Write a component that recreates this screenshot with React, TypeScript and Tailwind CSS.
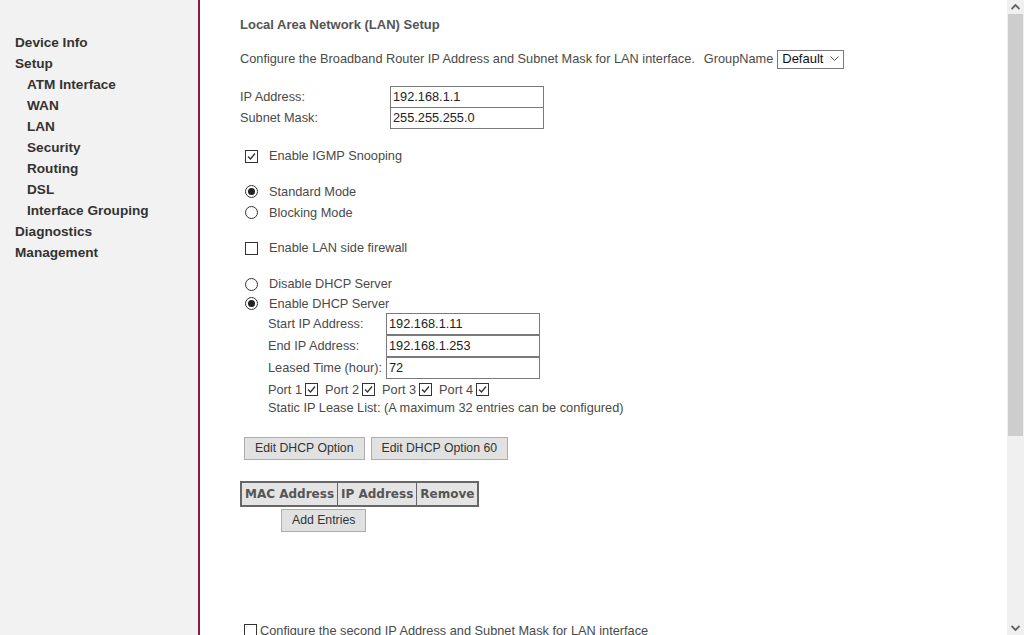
import React from "react";

const font = { fontFamily: '"Liberation Sans", Arial, sans-serif' };

const Check: React.FC<{ checked?: boolean }> = ({ checked }) => (
  <span className="inline-flex w-[13px] h-[13px] border border-[#333] bg-white items-center justify-center shrink-0">
    {checked && (
      <svg width="11" height="11" viewBox="0 0 11 11">
        <path d="M2 5.5 L4.5 8 L9 2.5" fill="none" stroke="#333" strokeWidth="1.3" />
      </svg>
    )}
  </span>
);

const Radio: React.FC<{ checked?: boolean }> = ({ checked }) => (
  <span className="inline-flex w-[13px] h-[13px] rounded-full border border-[#333] bg-white items-center justify-center shrink-0">
    {checked && <span className="w-[7px] h-[7px] rounded-full bg-[#222]" />}
  </span>
);

const Field: React.FC<{ value: string }> = ({ value }) => (
  <div className="w-[154px] h-[22px] border border-[#7a7a7a] bg-white px-[2px] flex items-center text-[#222] text-[12.75px]">
    {value}
  </div>
);

const Button: React.FC<{ label: string }> = ({ label }) => (
  <div className="h-[23px] px-[10px] flex items-center bg-[#e1e1e1] border border-[#adadad] text-[#333] text-[12.25px] whitespace-nowrap">
    {label}
  </div>
);

const menu: { label: string; sub?: boolean }[] = [
  { label: "Device Info" },
  { label: "Setup" },
  { label: "ATM Interface", sub: true },
  { label: "WAN", sub: true },
  { label: "LAN", sub: true },
  { label: "Security", sub: true },
  { label: "Routing", sub: true },
  { label: "DSL", sub: true },
  { label: "Interface Grouping", sub: true },
  { label: "Diagnostics" },
  { label: "Management" },
];

export default function App() {
  return (
    <div className="flex h-[635px] w-[1024px] overflow-hidden bg-white" style={font}>
      {/* left menu frame */}
      <div className="w-[198px] shrink-0 bg-[#f2f2f2] pt-[33px]">
        {menu.map((m) => (
          <div
            key={m.label}
            className={`h-[21px] flex items-center font-bold text-[13.6px] text-[#333] ${m.sub ? "pl-[27px]" : "pl-[15px]"}`}
          >
            {m.label}
          </div>
        ))}
      </div>
      <div className="w-[2px] shrink-0 bg-[#8b1a42]" />

      {/* main frame */}
      <div className="flex-1 pl-[40px] pt-[17px] text-[12.75px] text-[#4a4a4a] overflow-hidden">
        <div className="h-[16px] leading-[16px] font-bold text-[13px] text-[#555]">Local Area Network (LAN) Setup</div>

        <div className="mt-[16px] h-[20px] flex items-center whitespace-nowrap">
          <span>Configure the Broadband Router IP Address and Subnet Mask for LAN interface.</span>
          <span className="ml-[9px]">GroupName</span>
          <div className="ml-[4px] w-[67px] h-[19px] border border-[#7a7a7a] flex items-center justify-between px-[4px] text-[#111] text-[13px]">
            <span>Default</span>
            <svg width="9" height="6" viewBox="0 0 9 6">
              <path d="M0.5 0.5 L4.5 4.5 L8.5 0.5" fill="none" stroke="#555" strokeWidth="1" />
            </svg>
          </div>
        </div>

        <div className="mt-[17px]">
          <div className="flex items-center h-[21px]">
            <span className="w-[150px]">IP Address:</span>
            <Field value="192.168.1.1" />
          </div>
          <div className="flex items-center h-[21px]">
            <span className="w-[150px]">Subnet Mask:</span>
            <Field value="255.255.255.0" />
          </div>
        </div>

        <div className="mt-[20px] h-[16px] flex items-center pl-[5px] gap-[11px]">
          <Check checked />
          <span>Enable IGMP Snooping</span>
        </div>

        <div className="mt-[17px]">
          <div className="h-[21px] flex items-center pl-[5px] gap-[11px]">
            <Radio checked />
            <span>Standard Mode</span>
          </div>
          <div className="h-[21px] flex items-center pl-[5px] gap-[11px]">
            <Radio />
            <span>Blocking Mode</span>
          </div>
        </div>

        <div className="mt-[17px] h-[16px] flex items-center pl-[5px] gap-[11px]">
          <Check />
          <span>Enable LAN side firewall</span>
        </div>

        <div className="mt-[18px]">
          <div className="h-[20px] flex items-center pl-[5px] gap-[11px]">
            <Radio />
            <span>Disable DHCP Server</span>
          </div>
          <div className="h-[19px] flex items-center pl-[5px] gap-[11px]">
            <Radio checked />
            <span>Enable DHCP Server</span>
          </div>
        </div>

        <div className="pl-[28px]">
          <div className="h-[22px] flex items-center">
            <span className="w-[118px]">Start IP Address:</span>
            <Field value="192.168.1.11" />
          </div>
          <div className="h-[22px] flex items-center">
            <span className="w-[118px]">End IP Address:</span>
            <Field value="192.168.1.253" />
          </div>
          <div className="h-[22px] flex items-center">
            <span className="w-[118px] whitespace-nowrap">Leased Time (hour):</span>
            <Field value="72" />
          </div>
          <div className="h-[19px] mt-[1px] flex items-center gap-[3px]">
            {[1, 2, 3, 4].map((n) => (
              <span key={n} className="flex items-center gap-[3px] mr-[4px]">
                <span>Port {n}</span>
                <Check checked />
              </span>
            ))}
          </div>
          <div className="h-[18px] flex items-center">
            Static IP Lease List: (A maximum 32 entries can be configured)
          </div>
        </div>

        <div className="mt-[20px] pl-[4px] flex gap-[6px]">
          <Button label="Edit DHCP Option" />
          <Button label="Edit DHCP Option 60" />
        </div>

        <table
          className="mt-[21px] border-collapse border-2 border-[#666] text-[12px] font-bold text-[#555] whitespace-nowrap"
          style={{ fontFamily: '"DejaVu Sans", Verdana, sans-serif' }}
        >
          <tbody>
            <tr className="h-[24px] bg-[#e4e4e4]">
              <td className="border border-[#666] px-[3px]">MAC Address</td>
              <td className="border border-[#666] px-[3px]">IP Address</td>
              <td className="border border-[#666] px-[3px]">Remove</td>
            </tr>
          </tbody>
        </table>

        <div className="mt-[2px] ml-[41px] w-fit">
          <Button label="Add Entries" />
        </div>

        <div className="mt-[89px] flex items-center pl-[4px] gap-[3px] whitespace-nowrap">
          <Check />
          <span>Configure the second IP Address and Subnet Mask for LAN interface</span>
        </div>
      </div>

      {/* scrollbar */}
      <div className="w-[17px] shrink-0 bg-[#f0f0f0] flex flex-col">
        <div className="h-[14px] flex items-center justify-center">
          <svg width="9" height="6" viewBox="0 0 9 6">
            <path d="M0.5 5 L4.5 1 L8.5 5" fill="none" stroke="#606060" strokeWidth="1.8" />
          </svg>
        </div>
        <div className="mx-[1px] h-[422px] bg-[#cdcdcd]" />
        <div className="flex-1" />
        <div className="h-[14px] flex items-center justify-center">
          <svg width="9" height="6" viewBox="0 0 9 6">
            <path d="M0.5 1 L4.5 5 L8.5 1" fill="none" stroke="#606060" strokeWidth="1.8" />
          </svg>
        </div>
      </div>
    </div>
  );
}
